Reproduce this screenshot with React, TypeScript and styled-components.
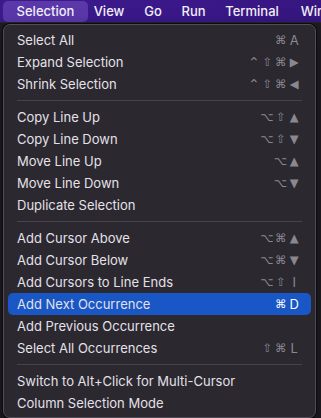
import React from 'react';
import styled, { createGlobalStyle } from 'styled-components';

const GlobalStyle = createGlobalStyle`
  html, body {
    margin: 0;
    padding: 0;
    background: #1d1c21;
    overflow: hidden;
  }
  * { box-sizing: border-box; }
`;

const Screen = styled.div`
  position: relative;
  width: 321px;
  height: 418px;
  overflow: hidden;
  font-family: Inter, "Noto Sans", "DejaVu Sans", sans-serif;
  -webkit-font-smoothing: antialiased;
`;

const MenuBar = styled.div`
  display: flex;
  align-items: center;
  height: 23px;
  padding-left: 3px;
  overflow: hidden;
  background: linear-gradient(90deg, #3b1a8c 0%, #3a1889 60%, #36167f 100%);
  border-bottom: 1px solid #27242c;
`;

const BarItem = styled.div<{ $active?: boolean; $w: number }>`
  height: 21px;
  width: ${p => p.$w}px;
  flex: none;
  display: flex;
  align-items: center;
  justify-content: center;
  border-radius: 5px;
  color: #f3f0fa;
  font-size: 13px;
  font-weight: 500;
  white-space: nowrap;
  background: ${p => (p.$active ? '#5b38aa' : 'transparent')};
`;

const Editor = styled.div`
  height: 395px;
  background: #1e1d22;
`;

const Dropdown = styled.div`
  position: absolute;
  top: 24px;
  left: 3px;
  width: 313px;
  padding: 4px 4px 3px;
  background: #2b2830;
  border: 1px solid #514d57;
  border-radius: 7px;
  box-shadow: 0 0 0 1px #0c0b0e, 0 8px 20px rgba(0, 0, 0, 0.5);
`;

const Row = styled.div<{ $active?: boolean }>`
  display: flex;
  align-items: center;
  justify-content: space-between;
  height: 22px;
  padding: 0 10px 0 9px;
  border-radius: 5px;
  font-size: 13px;
  color: #e4e1e8;
  background: ${p => (p.$active ? '#1956c6' : 'transparent')};
  white-space: nowrap;
`;

const Keys = styled.span<{ $active?: boolean }>`
  display: flex;
  align-items: center;
  color: ${p => (p.$active ? '#ffffff' : '#8b8791')};
`;

const Key = styled.span<{ $kind: 'letter' | 'ctrl' | 'sym' }>`
  display: inline-block;
  width: 13.5px;
  text-align: center;
  font-family: ${p => (p.$kind === 'letter' ? 'Inter, sans-serif' : '"DejaVu Sans", sans-serif')};
  font-size: ${p => (p.$kind === 'letter' ? '13px' : p.$kind === 'ctrl' ? '14px' : '11.5px')};
`;

const Separator = styled.div`
  height: 11px;
  display: flex;
  align-items: center;
  padding: 0 9px;

  &::after {
    content: '';
    flex: 1;
    height: 1px;
    background: #48444e;
  }
`;

type Item = { label: string; keys?: string; active?: boolean } | 'sep';

const items: Item[] = [
  { label: 'Select All', keys: '⌘A' },
  { label: 'Expand Selection', keys: '⌃⇧⌘▶' },
  { label: 'Shrink Selection', keys: '⌃⇧⌘◀' },
  'sep',
  { label: 'Copy Line Up', keys: '⌥⇧▲' },
  { label: 'Copy Line Down', keys: '⌥⇧▼' },
  { label: 'Move Line Up', keys: '⌥▲' },
  { label: 'Move Line Down', keys: '⌥▼' },
  { label: 'Duplicate Selection' },
  'sep',
  { label: 'Add Cursor Above', keys: '⌥⌘▲' },
  { label: 'Add Cursor Below', keys: '⌥⌘▼' },
  { label: 'Add Cursors to Line Ends', keys: '⌥⇧I' },
  { label: 'Add Next Occurrence', keys: '⌘D', active: true },
  { label: 'Add Previous Occurrence' },
  { label: 'Select All Occurrences', keys: '⇧⌘L' },
  'sep',
  { label: 'Switch to Alt+Click for Multi-Cursor' },
  { label: 'Column Selection Mode' },
];

const bar = [
  { label: 'Selection', w: 85, active: true },
  { label: 'View', w: 42 },
  { label: 'Go', w: 46 },
  { label: 'Run', w: 35 },
  { label: 'Terminal', w: 82 },
  { label: 'Window', w: 66 },
];

const kindOf = (k: string): 'letter' | 'ctrl' | 'sym' =>
  /[A-Z]/.test(k) ? 'letter' : k === '⌃' ? 'ctrl' : 'sym';

export default function App(): React.JSX.Element {
  return (
    <Screen>
      <GlobalStyle />
      <MenuBar>
        {bar.map(b => (
          <BarItem key={b.label} $active={b.active} $w={b.w}>
            {b.label}
          </BarItem>
        ))}
      </MenuBar>
      <Editor />
      <Dropdown>
        {items.map((it, i) =>
          it === 'sep' ? (
            <Separator key={i} />
          ) : (
            <Row key={i} $active={it.active}>
              <span>{it.label}</span>
              {it.keys && (
                <Keys $active={it.active}>
                  {Array.from(it.keys).map((k, j) => (
                    <Key key={j} $kind={kindOf(k)}>
                      {k}
                    </Key>
                  ))}
                </Keys>
              )}
            </Row>
          )
        )}
      </Dropdown>
    </Screen>
  );
}
